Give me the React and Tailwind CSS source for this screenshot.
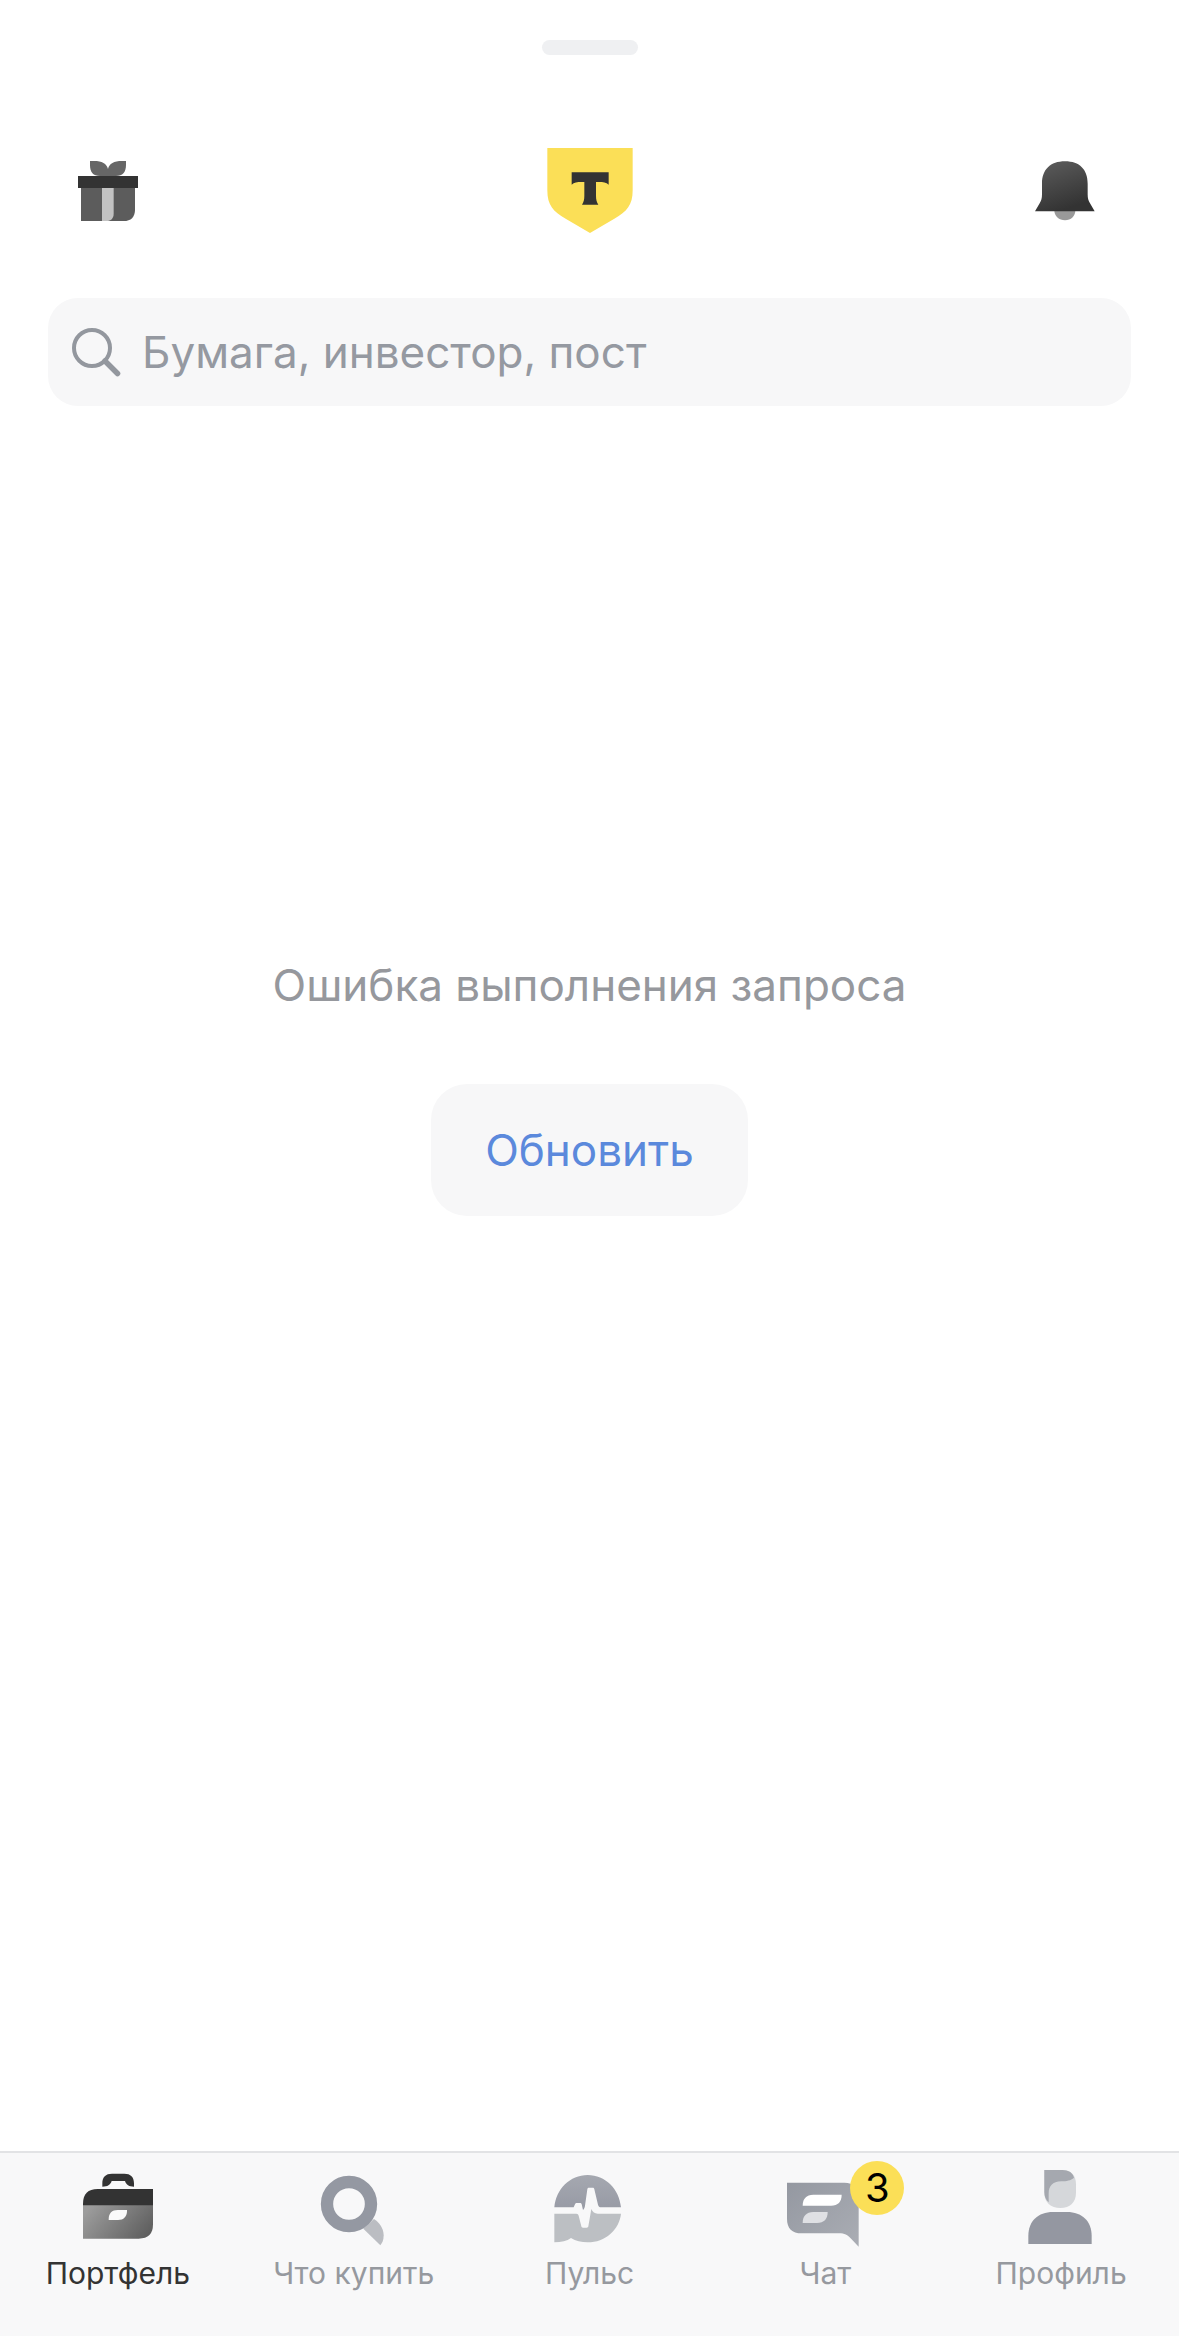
import React, { useState } from 'react';

const GiftIcon = () => (
  <svg className="h-[60px] w-[60px]" viewBox="84 90 180 180" aria-hidden="true">
    <path d="M120 90h12c24 0 38 8 42 24 4-16 18-24 42-24h12v12c0 22-10 33-30 33h-48c-20 0-30-11-30-33z" fill="#666" />
    <path d="M93 170h162v66c0 22-12 34-34 34H93z" fill="#5c5c5c" />
    <path d="M156 170h35v78c0 14-8 22-22 22h-13z" fill="#c3c3c3" />
    <path d="M84 135h180v36H84z" fill="#333" />
  </svg>
);

const BellIcon = () => (
  <svg className="h-[60px] w-[66px]" viewBox="76 62 198 180" aria-hidden="true">
    <defs>
      <linearGradient id="bell" x1="0" y1="0" x2="0.4" y2="1">
        <stop offset="0" stopColor="#5e5e5e" />
        <stop offset="1" stopColor="#333" />
      </linearGradient>
    </defs>
    <path d="M134 210h63c0 18-13 30-31 30s-32-12-32-30z" fill="#999" />
    <path d="M97 130c0-42 25-67 69-67s68 25 68 67v32c0 12 2 19 7 27l14 24H76l14-24c5-8 7-15 7-27z" fill="url(#bell)" />
  </svg>
);

const Logo = () => (
  <svg className="h-[85px] w-[86px]" viewBox="81 383 258 255" role="img" aria-label="Т-Инвестиции">
    <path d="M82 383h256v127c0 44-17 64-55 85l-73 43-73-43c-38-21-55-41-55-85z" fill="#fbdf57" />
    <path d="M155 456h111v37c-7-7-17-8-29-8h-9v42c0 11 2 19 7 26h-49c5-7 7-15 7-26v-42h-9c-12 0-22 1-29 8z" fill="#333" />
  </svg>
);

const SearchIcon = () => (
  <svg className="h-[50px] w-[50px] shrink-0" viewBox="1 0 50 50" fill="none" stroke="#93979e" aria-hidden="true">
    <circle cx="21" cy="21" r="18" strokeWidth="4" />
    <path d="M34 34l12.5 12.5" strokeWidth="5.5" strokeLinecap="round" />
  </svg>
);

const PortfolioIcon = () => (
  <svg className="h-[84px] w-[84px]" viewBox="138 78 252 252" aria-hidden="true">
    <defs>
      <linearGradient id="case" x1="0" y1="0.3" x2="1" y2="0.7">
        <stop offset="0" stopColor="#9c9c9c" />
        <stop offset="1" stopColor="#5f5f5f" />
      </linearGradient>
    </defs>
    <path d="M217 140v-10c0-19 10-29 29-29h37c19 0 29 10 29 29v10c-15 0-23-5-27-17h-40c-4 12-12 17-28 17z" fill="#333" />
    <path d="M159 195h210v58c0 29-14 43-43 43H159z" fill="url(#case)" />
    <path d="M159 196v-5c0-29 15-44 44-44h166v49z" fill="#333" />
    <path d="M236 240v-3c0-17 10-27 27-27h28v3c0 17-10 27-27 27z" fill="#fafafa" />
  </svg>
);

const ExploreIcon = () => (
  <svg className="h-[84px] w-[84px]" viewBox="155 78 252 252" aria-hidden="true">
    <path d="M309 266l32-29c14 9 29 27 29 49 0 14-4 23-10 30z" fill="#bbbdc2" />
    <circle cx="266" cy="192" r="66" fill="none" stroke="#9498a2" strokeWidth="37" />
  </svg>
);

const PulseIcon = () => (
  <svg className="h-[84px] w-[84px]" viewBox="82 78 252 252" aria-hidden="true">
    <defs>
      <linearGradient id="pulse" x1="0" y1="0" x2="0" y2="1">
        <stop offset="0" stopColor="#a5a8b0" />
        <stop offset="1" stopColor="#979aa5" />
      </linearGradient>
    </defs>
    <path d="M104 202c5-55 47-97 100-97s95 42 100 97h-59c-6 0-9-3-10-8l-11-46c-1-4-2-5-5-5h-11c-3 0-4 1-5 5l-7 49c-1 6-3 10-6 13l-4-17c-1-3-2-4-5-4h-9c-3 0-5 1-6 4l-4 9z" fill="url(#pulse)" />
    <path d="M104 221h66c4 0 6 2 7 6l8 32c1 3 2 4 5 4h11c3 0 4-1 5-4l9-52c4 9 10 14 19 14h70c-5 48-47 86-100 86-19 0-36-4-50-13-12 9-29 13-50 13z" fill="#bcbfc3" />
  </svg>
);

const ChatIcon = () => (
  <svg className="h-[84px] w-[84px]" viewBox="70 78 252 252" aria-hidden="true">
    <defs>
      <linearGradient id="chat" x1="0" y1="0" x2="1" y2="1">
        <stop offset="0" stopColor="#9498a1" />
        <stop offset="1" stopColor="#aaadb4" />
      </linearGradient>
    </defs>
    <path d="M82 128h172c28 0 43 15 43 43v149l-22-23c-12-12-20-17-37-17H126c-29 0-44-15-44-44z" fill="url(#chat)" />
    <path d="M129 197c0-21 11-33 32-33h85c0 21-11 33-32 33z" fill="#fff" />
    <path d="M129 249c0-21 11-33 32-33h43c0 21-11 33-32 33z" fill="#dfe0e4" />
  </svg>
);

const ProfileIcon = () => (
  <svg className="h-[84px] w-[84px]" viewBox="117 78 252 252" aria-hidden="true">
    <path d="M193 90h52c28 0 43 15 43 43v25c0 29-18 46-47 46s-48-17-48-46z" fill="#d5d7da" />
    <path d="M193 90h54c19 0 32 9 35 23-10 9-22 10-38 11-27 1-38 14-38 37v26c-9-8-13-18-13-31z" fill="#a5a8af" />
    <path d="M145 312v-24c0-45 29-72 74-72h42c45 0 74 27 74 72v24z" fill="#9497a1" />
  </svg>
);

const tabs = [
  { id: 'portfolio', label: 'Портфель', Icon: PortfolioIcon },
  { id: 'explore', label: 'Что купить', Icon: ExploreIcon },
  { id: 'pulse', label: 'Пульс', Icon: PulseIcon },
  { id: 'chat', label: 'Чат', Icon: ChatIcon, badge: 3 },
  { id: 'profile', label: 'Профиль', Icon: ProfileIcon },
];

const App = () => {
  const [query, setQuery] = useState('');

  return (
    <div className="flex min-h-screen flex-col bg-white font-['Inter','Liberation_Sans',sans-serif]">
      <div className="mx-auto mt-10 h-[15px] w-24 rounded-full bg-[#eff0f2]" />

      <header className="mt-[93px] grid grid-cols-[1fr_auto_1fr] items-center px-[78px]">
        <button type="button" aria-label="Подарки" className="justify-self-start">
          <GiftIcon />
        </button>
        <Logo />
        <button type="button" aria-label="Уведомления" className="justify-self-end">
          <BellIcon />
        </button>
      </header>

      <label className="mx-12 mt-[65px] flex h-[108px] items-center gap-5 rounded-[30px] bg-[#f7f7f8] px-6">
        <SearchIcon />
        <input
          type="text"
          value={query}
          onChange={(e) => setQuery(e.target.value)}
          aria-label="Поиск"
          placeholder="Бумага, инвестор, пост"
          className="min-w-0 flex-1 bg-transparent text-[44px] leading-[56px] text-[#333] outline-none placeholder:text-[#9599a1]"
        />
      </label>

      <main className="flex flex-1 flex-col items-center pt-[551px]">
        <p className="text-[44px] leading-[56px] text-[#96989d]">Ошибка выполнения запроса</p>
        <button
          type="button"
          className="mt-[71px] h-[132px] rounded-[36px] bg-[#f7f7f8] px-[54px] text-[44px] leading-[56px] text-[#5b89dc]"
        >
          Обновить
        </button>
      </main>

      <nav className="grid h-[185px] grid-cols-5 border-t-2 border-[#e2e3e5] bg-[#f8f8f9] pt-[13px]">
        {tabs.map(({ id, label, Icon, badge }) => (
          <a
            key={id}
            href={`#${id}`}
            className={`flex flex-col items-center gap-[3px] text-[30px] leading-10 ${id === 'portfolio' ? 'text-[#333]' : 'text-[#96999f]'}`}
          >
            <span className="relative">
              <Icon />
              {badge && (
                <span className="absolute -top-[5px] left-[67px] flex h-[54px] w-[54px] items-center justify-center rounded-full bg-[#fbdf57] text-[40px] text-black">
                  {badge}
                </span>
              )}
            </span>
            {label}
          </a>
        ))}
      </nav>
    </div>
  );
};

export default App;
